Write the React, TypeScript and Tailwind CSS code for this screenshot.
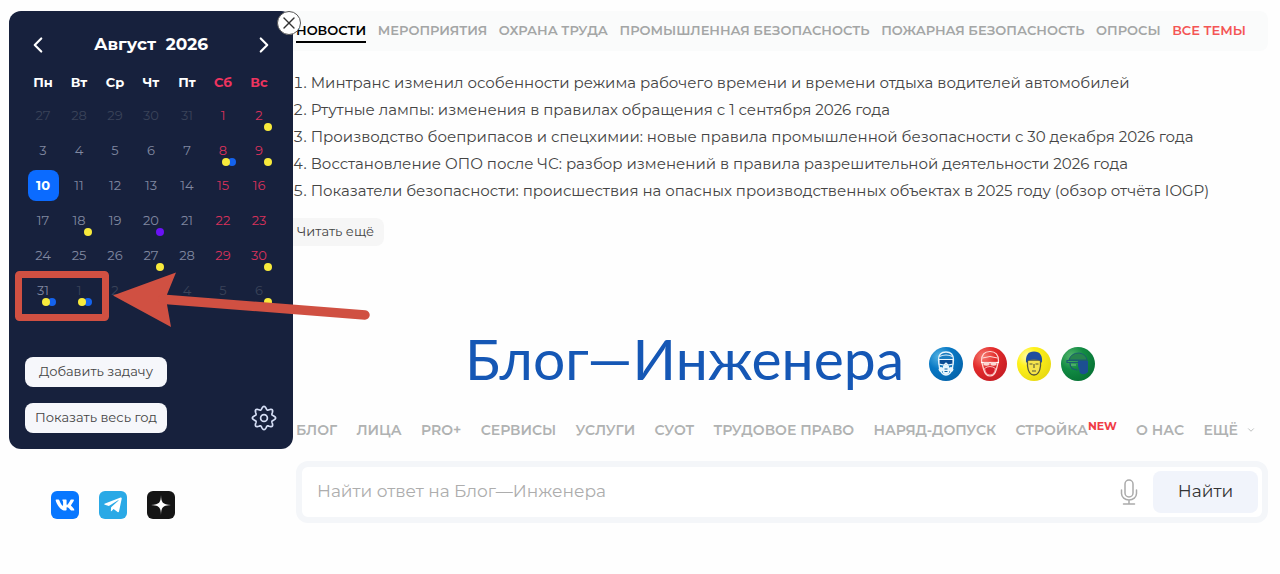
import { ChevronDown, ChevronLeft, ChevronRight, X } from "lucide-react";
import { FaTelegramPlane, FaVk } from "react-icons/fa";

type Dot = "yellow" | "blue" | "violet";

interface Day {
    day: number;
    muted?: boolean;
    today?: boolean;
    dots?: Dot[];
}

const weekDays = ["Пн", "Вт", "Ср", "Чт", "Пт", "Сб", "Вс"];

const weeks: Day[][] = [
    [{ day: 27, muted: true }, { day: 28, muted: true }, { day: 29, muted: true }, { day: 30, muted: true }, { day: 31, muted: true }, { day: 1 }, { day: 2, dots: ["yellow"] }],
    [{ day: 3 }, { day: 4 }, { day: 5 }, { day: 6 }, { day: 7 }, { day: 8, dots: ["yellow", "blue"] }, { day: 9, dots: ["yellow"] }],
    [{ day: 10, today: true }, { day: 11 }, { day: 12 }, { day: 13 }, { day: 14 }, { day: 15 }, { day: 16 }],
    [{ day: 17 }, { day: 18, dots: ["yellow"] }, { day: 19 }, { day: 20, dots: ["violet"] }, { day: 21 }, { day: 22 }, { day: 23 }],
    [{ day: 24 }, { day: 25 }, { day: 26 }, { day: 27, dots: ["yellow"] }, { day: 28 }, { day: 29 }, { day: 30, dots: ["yellow"] }],
    [{ day: 31, dots: ["yellow", "blue"] }, { day: 1, muted: true, dots: ["yellow", "blue"] }, { day: 2, muted: true }, { day: 3, muted: true }, { day: 4, muted: true }, { day: 5, muted: true }, { day: 6, muted: true, dots: ["yellow"] }],
];

const dotColors: Record<Dot, string> = {
    yellow: "z-10 bg-[#f8ea3c]",
    blue: "bg-[#1463ee]",
    violet: "bg-[#6a12f5]",
};

const topics = ["Новости", "Мероприятия", "Охрана труда", "Промышленная безопасность", "Пожарная безопасность", "Опросы", "Все темы"];

const news = [
    "Минтранс изменил особенности режима рабочего времени и времени отдыха водителей автомобилей",
    "Ртутные лампы: изменения в правилах обращения с 1 сентября 2026 года",
    "Производство боеприпасов и спецхимии: новые правила промышленной безопасности с 30 декабря 2026 года",
    "Восстановление ОПО после ЧС: разбор изменений в правила разрешительной деятельности 2026 года",
    "Показатели безопасности: происшествия на опасных производственных объектах в 2025 году (обзор отчёта IOGP)",
];

const sections = ["Блог", "Лица", "PRO+", "Сервисы", "Услуги", "СУОТ", "Трудовое право", "Наряд-допуск", "Стройка", "О нас"];

const dayColor = (item: Day, index: number) => {
    if (item.today) return "font-bold text-white";
    if (item.muted) return "text-[#3a4359]";
    return index > 4 ? "text-[#d8315b]" : "text-[#8088a0]";
};

// Outline of a cog with eight soft teeth
const gearPoints = Array.from({ length: 144 }, (_, i) => {
    const angle = (i * Math.PI) / 72;
    const radius = 10.1 + 1.5 * Math.cos(angle * 8);
    return `${(13 + radius * Math.sin(angle)).toFixed(2)},${(13 - radius * Math.cos(angle)).toFixed(2)}`;
}).join(" ");

const GearIcon = () => (
    <svg viewBox="0 0 26 26" className="size-[26px]" fill="none" stroke="currentColor" strokeWidth="1.7" strokeLinejoin="round" aria-hidden="true">
        <polygon points={gearPoints} />
        <circle cx="13" cy="13" r="3.4" />
    </svg>
);

const MicIcon = () => (
    <svg viewBox="0 0 18 28" className="h-7 w-[18px]" fill="none" stroke="currentColor" strokeWidth="1.5" strokeLinecap="round" aria-hidden="true">
        <rect x="5" y="2" width="8" height="17" rx="4" />
        <path d="M1.5 12v3.5a7.5 6.5 0 0 0 15 0V12M9 22v4M3.5 26h11" />
    </svg>
);

// Red frame round 31 August / 1 September and the arrow that points to it
const Highlight = () => (
    <svg viewBox="0 0 370 70" className="pointer-events-none absolute top-[254px] left-0 z-20 h-[70px] w-[370px]" aria-hidden="true">
        <rect x="9.5" y="9.5" width="87" height="43" rx="1" fill="none" stroke="#d05042" strokeWidth="7" strokeLinejoin="round" />
        <path d="M104 30.5 167 7.5 158 29.5V39.5L162 62Z" fill="#d05042" />
        <path d="M154 34.2 356 50" stroke="#d05042" strokeWidth="9.5" strokeLinecap="round" />
    </svg>
);

const SafetySigns = () => (
    <div className="flex items-center gap-2" aria-hidden="true">
        <svg viewBox="0 0 36 36" className="size-9">
            <defs>
                <radialGradient id="blue" cx="30%" cy="28%" r="75%"><stop offset="0" stopColor="#55b4e4" /><stop offset=".5" stopColor="#0878c4" /><stop offset="1" stopColor="#0465ad" /></radialGradient>
            </defs>
            <circle cx="18" cy="18" r="17" fill="url(#blue)" />
            <path d="M10.5 14q0-8 7.500-8t7.500 8l-1 8q-2 7-6.500 7t-6.500-7Z" fill="#1a7cc0" stroke="#e8f5fc" strokeWidth="1.3" />
            <path d="M11.5 10.500q6.500-3 13 0" stroke="#e8f5fc" strokeWidth="1.2" fill="none" />
            <path d="M11 13.500h14v4.500l-5 1-2-2-2 2-5-1Z" fill="#0a4c94" stroke="#e8f5fc" strokeWidth="1.2" />
            <path d="m15 20 3-2 3 2v7l-3 2-3-2Z" fill="#e8f5fc" />
            <circle cx="13" cy="23.5" r="2.4" fill="#e8f5fc" />
            <circle cx="23" cy="23.5" r="2.4" fill="#e8f5fc" />
            <path d="M16.500 23h3M16.500 25.500h3" stroke="#0b65a8" />
        </svg>
        <svg viewBox="0 0 36 36" className="size-9">
            <defs>
                <radialGradient id="red" cx="30%" cy="28%" r="75%"><stop offset="0" stopColor="#f57b70" /><stop offset=".5" stopColor="#e32b2b" /><stop offset="1" stopColor="#c91f25" /></radialGradient>
            </defs>
            <circle cx="18" cy="18" r="17" fill="url(#red)" />
            <path d="M9.500 15q0-9.500 8.500-9.500t8.500 9.500l-2 8q-2 7-6.500 7t-6.500-7Z" fill="none" stroke="#ffdcd8" strokeWidth="1.2" />
            <path d="M10.500 12q7.500-3 15 0" stroke="#ffdcd8" fill="none" />
            <path d="M9 16.500h18" stroke="#fff" strokeWidth="1.2" />
            <path d="M11.500 16h6v3q-3 1.500-6 0ZM18.500 16h6v3q-3 1.500-6 0Z" fill="#fbd8d4" />
            <path d="M12.500 22.500q5.500-4 11 0-1 6.500-5.500 6.500t-5.500-6.500Z" fill="#d61f2a" stroke="#ffdcd8" strokeWidth=".8" />
        </svg>
        <svg viewBox="0 0 36 36" className="size-9">
            <defs>
                <radialGradient id="yellow" cx="30%" cy="28%" r="75%"><stop offset="0" stopColor="#fffbb0" /><stop offset=".4" stopColor="#fff21c" /><stop offset="1" stopColor="#eadb12" /></radialGradient>
            </defs>
            <circle cx="18" cy="18" r="17" fill="url(#yellow)" />
            <path d="M11.500 14v6q1 9 6.500 9t6.500-9v-6Z" fill="#f5e44c" stroke="#55563a" strokeWidth="1.3" />
            <path d="M10 17q-1-11.500 8-11.500t8 11.500l-2-2.500q-6-2-12 0Z" fill="#1f4c9f" />
            <path d="M13.500 18h3M19.500 18h3M18 18v4M16 25h4" stroke="#55563a" strokeWidth="1.1" />
        </svg>
        <svg viewBox="0 0 36 36" className="size-9">
            <defs>
                <radialGradient id="green" cx="30%" cy="28%" r="75%"><stop offset="0" stopColor="#55b66e" /><stop offset=".5" stopColor="#128b43" /><stop offset="1" stopColor="#087536" /></radialGradient>
            </defs>
            <circle cx="18" cy="18" r="17" fill="url(#green)" />
            <path d="M9 14q2-7 10-7 7 1 8 7Z" fill="#27834e" stroke="#1b5d70" />
            <path d="M7 14.500h20v2H7ZM10 17q0 7 8 7" fill="none" stroke="#1b5d70" strokeWidth="1.2" />
            <path d="M18 15h10v11q-4 4-8 1l-2-7Z" fill="#1c4f91" />
            <path d="M11 19h5" stroke="#72bd83" />
        </svg>
    </div>
);

const Calendar = () => (
    <section className="relative flex flex-col rounded-xl bg-[#17213d] px-4 pt-5 pb-4 text-white" aria-label="Календарь">
        <button type="button" aria-label="Закрыть" className="absolute top-0 -right-2 z-10 flex size-6 items-center justify-center rounded-full border border-[#555] bg-white text-[#333]">
            <X className="size-5 shrink-0" strokeWidth={1.6} />
        </button>

        <div className="flex h-7 items-center justify-between">
            <button type="button" aria-label="Предыдущий месяц"><ChevronLeft className="size-[26px]" /></button>
            <h2 className="text-[17px] font-bold">Август&nbsp; 2026</h2>
            <button type="button" aria-label="Следующий месяц"><ChevronRight className="size-[26px]" /></button>
        </div>

        <table className="mt-2 w-full table-fixed text-center text-[13px]">
            <thead>
                <tr className="h-[31px]">
                    {weekDays.map((name, index) => (
                        <th key={name} className={index > 4 ? "font-bold text-[#ee345f]" : "font-bold"}>{name}</th>
                    ))}
                </tr>
            </thead>
            <tbody>
                {weeks.map((week, row) => (
                    <tr key={row} className="h-[35px]">
                        {week.map((item, index) => (
                            <td key={index} className="relative p-0">
                                <span className={`mx-auto flex size-[31px] items-center justify-center rounded-lg ${item.today ? "bg-[#0b6bff]" : ""} ${dayColor(item, index)}`}>
                                    {item.day}
                                </span>
                                {item.dots && (
                                    <span className="absolute right-[5px] bottom-0.5 flex -space-x-0.5">
                                        {item.dots.map((dot) => (
                                            <i key={dot} className={`relative size-2 rounded-full ${dotColors[dot]}`} />
                                        ))}
                                    </span>
                                )}
                            </td>
                        ))}
                    </tr>
                ))}
            </tbody>
        </table>

        <div className="mt-[49px] flex items-end justify-between">
            <div className="flex w-[142px] flex-col gap-4 text-[13px] text-[#444]">
                <button type="button" className="h-[30px] rounded-lg bg-[#f6f7fb]">Добавить задачу</button>
                <button type="button" className="h-[30px] rounded-lg bg-[#f6f7fb]">Показать весь год</button>
            </div>
            <button type="button" aria-label="Настройки" className="mb-0.5 text-[#d5def5]"><GearIcon /></button>
        </div>

        <Highlight />
    </section>
);

const Socials = () => (
    <div className="mt-[42px] flex gap-5 pl-[42px]">
        <a href="#vk" aria-label="ВКонтакте" className="flex size-7 items-center justify-center rounded-md bg-[#0877ff] text-white">
            <FaVk className="size-5" />
        </a>
        <a href="#telegram" aria-label="Telegram" className="flex size-7 items-center justify-center rounded-md bg-[#2aa9e6] text-white">
            <FaTelegramPlane className="size-5" />
        </a>
        <a href="#zen" aria-label="Дзен" className="flex size-7 items-center justify-center rounded-md bg-[#151515] text-white">
            <svg viewBox="0 0 20 20" className="size-5" fill="currentColor" aria-hidden="true">
                <path d="M10 0c.3 7.500 1.500 9.500 10 10-8.500.5-9.700 2.500-10 10-.3-7.500-1.500-9.500-10-10 8.500-.5 9.700-2.500 10-10Z" />
            </svg>
        </a>
    </div>
);

const Search = () => (
    <form className="mt-[19px] ml-[3px] flex h-[62px] items-center rounded-xl border-[6px] border-[#f4f6f9] bg-white pr-1 pl-[15px]" onSubmit={(e) => e.preventDefault()}>
        <input
            type="text"
            aria-label="Поиск"
            placeholder="Найти ответ на Блог—Инженера"
            className="min-w-0 flex-1 text-[17px] outline-none placeholder:text-[#adadad]"
        />
        <button type="button" aria-label="Голосовой поиск" className="mr-[15px] text-[#aaa]"><MicIcon /></button>
        <button type="submit" className="h-[42px] w-[105px] rounded-lg bg-[#f1f4fb] text-[17px] text-[#333]">Найти</button>
    </form>
);

export default function App() {
    return (
        <div className="flex min-h-screen items-start bg-[#fefefe] pt-[11px] pr-3 pl-[9px] font-['Montserrat','Inter',sans-serif]">
            <aside className="z-10 w-[284px] shrink-0">
                <Calendar />
                <Socials />
            </aside>

            <main className="min-w-0 flex-1">
                <nav className="flex h-10 items-center justify-between rounded-r-lg bg-[#fafbfb] pr-[22px] pl-[3px] text-[13px] font-semibold whitespace-nowrap text-[#a4a6a6] uppercase" aria-label="Темы">
                    {topics.map((topic, index) => (
                        <a
                            key={topic}
                            href="#topic"
                            className={index === 0 ? "border-b-2 border-black pt-0.5 text-black" : index === 6 ? "text-[#f45555]" : ""}
                        >
                            {topic}
                        </a>
                    ))}
                </nav>

                <ol className="mt-[18px] list-inside list-decimal text-[15px] leading-[27px] whitespace-nowrap text-[#444]">
                    {news.map((title) => (
                        <li key={title}><a href="#news">{title}</a></li>
                    ))}
                </ol>
                <button type="button" className="mt-3.5 h-7 rounded-r-lg bg-[#f6f6f6] pr-2.5 pl-1 text-[13px] text-[#444]">Читать ещё</button>

                <div className="mt-[78px] flex h-20 items-center justify-center gap-6">
                    <h1 className="pb-3 font-[Lato] text-[57px] leading-none text-[#1557b5]">Блог—Инженера</h1>
                    <SafetySigns />
                </div>

                <nav className="mt-3.5 flex h-6 items-center justify-between pr-3 pl-[3px] text-sm font-semibold whitespace-nowrap text-[#b0b2b2] uppercase" aria-label="Разделы">
                    {sections.map((section) => (
                        <a key={section} href="#section" className="flex items-start">
                            {section}
                            {section === "Стройка" && <sup className="top-0 text-[11px] leading-3 font-bold text-[#f03c46]">New</sup>}
                        </a>
                    ))}
                    <button type="button" className="flex items-center gap-2 uppercase">
                        Ещё <ChevronDown className="size-2.5" />
                    </button>
                </nav>

                <Search />
            </main>
        </div>
    );
}
